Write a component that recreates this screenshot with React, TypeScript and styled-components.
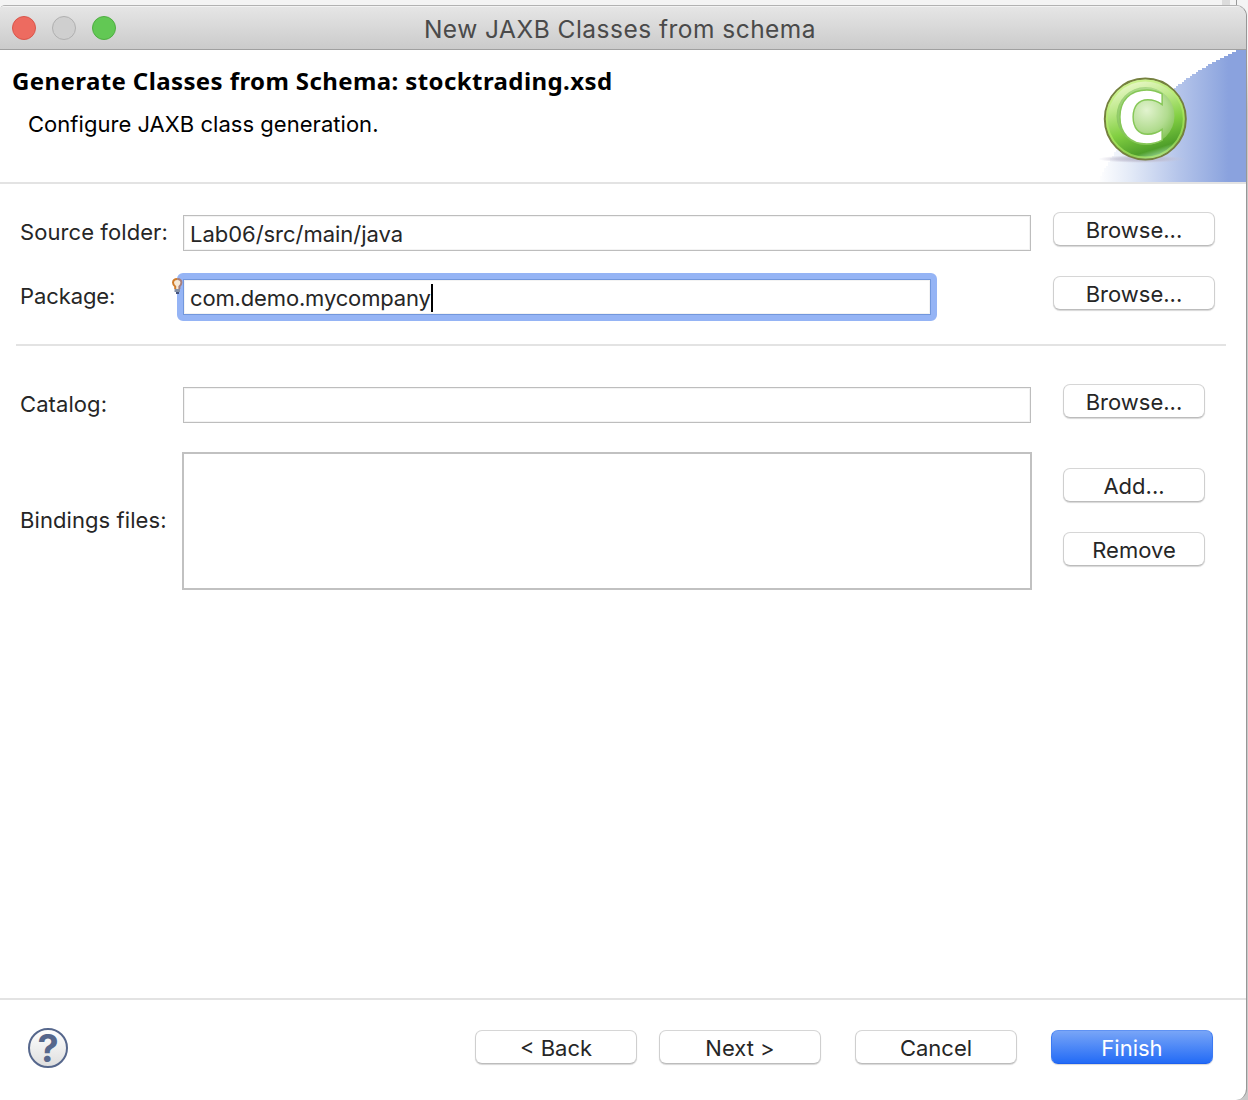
import React from "react";
import styled, { createGlobalStyle } from "styled-components";

const GlobalStyle = createGlobalStyle`
  * { box-sizing: border-box; }
  body {
    margin: 0;
    background: #f4f4f4;
    font-family: Inter, "Liberation Sans", sans-serif;
    font-size: 22px;
    color: #262626;
  }
`;

const Desktop = styled.div`
  display: flex;
  flex-direction: column;
  width: 1248px;
  height: 1100px;
  overflow: hidden;
  background: linear-gradient(#f4f4f4 0 60px, #c9c9c9 110px);
`;

const Backdrop = styled.div`
  display: flex;
  justify-content: flex-end;
  height: 5px;
  flex: none;
  background: #f4f4f4;
`;

const BackdropScroller = styled.div`
  width: 8px;
  margin-right: 6px;
  background: #dcdcdc;
`;

const BackdropEdge = styled.div`
  width: 12px;
  border-left: 1px solid #9a9a9a;
`;

const Window = styled.main`
  display: flex;
  flex-direction: column;
  width: 1247px;
  height: 1095px;
  background: #fff;
  border-top: 1px solid #b2b2b2;
  border-right: 1px solid #979797;
  border-radius: 5px 11px 11px 0;
  overflow: hidden;
`;

const TitleBar = styled.header`
  display: grid;
  grid-template-columns: 1fr auto 1fr;
  align-items: center;
  height: 44px;
  flex: none;
  padding: 0 18px 0 12px;
  background: linear-gradient(#e6e6e6, #cbcbcb);
  border-bottom: 1px solid #a0a0a0;
  box-shadow: inset 0 1px 0 #f3f3f3;
`;

const Lights = styled.div`
  display: flex;
  gap: 16px;
`;

const Light = styled.span<{ $fill: string; $edge: string }>`
  width: 24px;
  height: 24px;
  border-radius: 50%;
  background: ${(p) => p.$fill};
  border: 1px solid ${(p) => p.$edge};
`;

const WindowTitle = styled.div`
  font-size: 24.5px;
  line-height: 30px;
  letter-spacing: 0.48px;
  color: #4a4a4a;
  padding-top: 2px;
`;

const Banner = styled.section`
  display: flex;
  justify-content: space-between;
  height: 134px;
  flex: none;
  border-bottom: 2px solid #e3e3e3;
`;

const BannerText = styled.div`
  padding: 14px 0 0 12px;
  color: #000;
`;

const Heading = styled.h1`
  margin: 0;
  font: 700 24px/34px "Noto Sans", "Open Sans", sans-serif;
  letter-spacing: 0.4px;
`;

const Description = styled.p`
  margin: 11px 0 0 16px;
  line-height: 30px;
  letter-spacing: 0.03px;
`;

const Form = styled.section`
  display: flex;
  flex-direction: column;
  flex: 1;
  padding: 28px 20px 0 20px;
`;

const Row = styled.div<{ $top?: number }>`
  display: grid;
  grid-template-columns: 163px 848px 162px;
  column-gap: 0;
  justify-content: start;
  margin-top: ${(p) => p.$top ?? 0}px;
  height: 39px;
  & > :last-child { margin-left: 22px; }
`;

const Label = styled.label<{ $top?: number; $track?: number }>`
  padding-top: ${(p) => p.$top ?? 5}px;
  line-height: 30px;
  letter-spacing: ${(p) => p.$track ?? 0.08}px;
  white-space: nowrap;
`;

const Field = styled.div<{ $focused?: boolean; $width?: number; $track?: number }>`
  position: relative;
  width: ${(p) => p.$width ?? 848}px;
  height: 36px;
  margin-top: 3px;
  padding: 3px 6px 0;
  display: flex;
  line-height: 30px;
  letter-spacing: ${(p) => p.$track ?? -0.03}px;
  background: #fff;
  border: 1px solid ${(p) => (p.$focused ? "#7297dc" : "#bdbdbd")};
  box-shadow: inset 0 0 0 1px #f3f3f3;
`;

const FocusRing = styled.span`
  position: absolute;
  inset: -7px;
  border: 6px solid #95b4f5;
  border-radius: 6px;
  pointer-events: none;
`;

const Caret = styled.span`
  width: 2px;
  height: 28px;
  margin-top: 1px;
  background: #000;
`;

const Hint = styled.svg`
  position: absolute;
  left: -12px;
  top: -2px;
`;

const Button = styled.button<{ $primary?: boolean; $width?: number }>`
  width: ${(p) => p.$width ?? 162}px;
  height: 34px;
  flex: none;
  padding: 2px 0 0;
  font: inherit;
  line-height: 30px;
  letter-spacing: 0;
  color: ${(p) => (p.$primary ? "#fff" : "#262626")};
  background: ${(p) => (p.$primary ? "linear-gradient(#78a5f7, #236bf6)" : "#fff")};
  border: 1px solid;
  border-color: ${(p) => (p.$primary ? "#5f92f3 #3c7af3 #1c60ee" : "#d6d6d6 #cfcfcf #bcbcbc")};
  border-radius: 7px;
  box-shadow: 0 1px 1px rgba(0, 0, 0, 0.16);
  white-space: nowrap;
`;

const SmallButton = styled(Button)`
  width: 142px;
`;

const ButtonInset = styled.div`
  padding-left: 10px;
`;

const Divider = styled.hr`
  width: 1210px;
  height: 2px;
  margin: 29px 0 0 -4px;
  border: 0;
  flex: none;
  background: #e3e3e3;
`;

const BindingsRow = styled.div`
  display: grid;
  grid-template-columns: 162px 850px 142px;
  margin-top: 29px;
  height: 138px;
`;

const List = styled.div`
  background: #fff;
  border: 2px solid #c1c1c1;
`;

const ButtonStack = styled.div`
  display: flex;
  flex-direction: column;
  gap: 30px;
  padding: 16px 0 0 31px;
`;

const Footer = styled.footer`
  display: flex;
  height: 102px;
  flex: none;
  padding: 30px 33px 0 28px;
  border-top: 2px solid #e3e3e3;
`;

const HelpButton = styled.svg`
  margin: -2px auto 0 0;
  overflow: visible;
`;

const NavButtons = styled.div`
  display: flex;
  gap: 22px;
  margin-right: 34px;
`;

const EndButtons = styled.div`
  display: flex;
  gap: 34px;
`;

/* Stepped arc, two pixels per step, closing along the right and bottom edges. */
function steppedArc(): string {
  let d = "M150 132 L150 0";
  for (let y = 0; y < 132; y += 2) {
    const dy = 262 - (y + 1);
    const x = Math.min(150, Math.max(0, 256.6 - Math.sqrt(286 * 286 - dy * dy)));
    const snapped = Math.round(x / 2) * 2;
    d += ` L${snapped} ${y} L${snapped} ${y + 2}`;
  }
  return d + " Z";
}

function BannerArt() {
  return (
    <svg width="150" height="132" viewBox="0 0 150 132">
      <defs>
        <linearGradient id="sky" x1="0" x2="1">
          <stop offset="0" stopColor="#ffffff" />
          <stop offset="0.22" stopColor="#e3eaf7" />
          <stop offset="0.55" stopColor="#b4c4ea" />
          <stop offset="0.82" stopColor="#92a9e0" />
          <stop offset="0.88" stopColor="#8aa2de" />
          <stop offset="1" stopColor="#8aa2de" />
        </linearGradient>
        <linearGradient id="ball" x1="0.3" y1="0" x2="0.62" y2="1">
          <stop offset="0" stopColor="#effad0" />
          <stop offset="0.3" stopColor="#bfe98c" />
          <stop offset="0.6" stopColor="#82cf42" />
          <stop offset="0.88" stopColor="#4f9f2a" />
          <stop offset="1" stopColor="#a5dcae" />
        </linearGradient>
        <radialGradient id="dish" cx="0.52" cy="0.4" r="0.6">
          <stop offset="0" stopColor="#e2f3cf" />
          <stop offset="0.6" stopColor="#b2dc90" />
          <stop offset="1" stopColor="#7fc052" />
        </radialGradient>
        <radialGradient id="shade">
          <stop offset="0" stopColor="#b0acc2" stopOpacity="0.9" />
          <stop offset="0.6" stopColor="#bdbacd" stopOpacity="0.6" />
          <stop offset="1" stopColor="#c9c6d8" stopOpacity="0" />
        </radialGradient>
      </defs>
      <path d={steppedArc()} fill="url(#sky)" shapeRendering="crispEdges" />
      <ellipse cx="46" cy="109" rx="44" ry="4" fill="url(#shade)" />
      <circle cx="49.3" cy="69" r="40.5" fill="url(#ball)" stroke="#75803f" strokeWidth="2" />
      <circle cx="49.3" cy="69" r="38.5" fill="none" stroke="#b9ef6b" strokeOpacity="0.6" strokeWidth="2" />
      <circle cx="49.5" cy="66" r="29" fill="url(#dish)" />
      <text
        x="20.5"
        y="93"
        fontFamily="DejaVu Sans, sans-serif"
        fontWeight="700"
        fontSize="72"
        textLength="50"
        lengthAdjust="spacingAndGlyphs"
        fill="#fff"
        stroke="#86c757"
        strokeWidth="1.5"
      >
        C
      </text>
    </svg>
  );
}

function HelpIcon() {
  return (
    <HelpButton width="40" height="40" viewBox="0 0 40 40">
      <defs>
        <linearGradient id="help" x1="0" y1="0" x2="0" y2="1">
          <stop offset="0" stopColor="#fff" />
          <stop offset="1" stopColor="#dedede" />
        </linearGradient>
      </defs>
      <circle cx="20" cy="20" r="19" fill="url(#help)" stroke="#56678c" strokeWidth="2" />
      <text x="20.2" y="34" textAnchor="middle" fontFamily="Inter, sans-serif" fontWeight="700" fontSize="38" fill="#56678c">
        ?
      </text>
    </HelpButton>
  );
}

function Bulb() {
  return (
    <Hint width="12" height="16" viewBox="0 0 12 16">
      <path d="M3.2 11 V8.5 Q1 7 1 4.6 Q1.2 1 5.2 1 Q9.4 1 9.4 4.6 Q9.4 7 7.4 8.5 V11 Z" fill="#f6e9d6" />
      <path d="M3.2 11 V8.5 Q1 7 1 4.6 Q1.2 1 5.2 1" fill="none" stroke="#d07c2a" strokeWidth="2" />
      <path d="M5.2 1 Q9.4 1 9.4 4.6 Q9.4 7 7.4 8.5 V11" fill="none" stroke="#a87f7c" strokeWidth="2" />
      <path d="M2.5 11h5.5v3h-5.5z" fill="#8490a6" />
      <path d="M4 14h3v2h-3z" fill="#44547f" />
    </Hint>
  );
}

export default function App() {
  return (
    <>
      <GlobalStyle />
      <Desktop>
        <Backdrop>
          <BackdropScroller />
          <BackdropEdge />
        </Backdrop>
        <Window>
          <TitleBar>
            <Lights>
              <Light $fill="#ed6b60" $edge="#d9564b" />
              <Light $fill="#cfcfcf" $edge="#b0b0b0" />
              <Light $fill="#62c854" $edge="#4fae42" />
            </Lights>
            <WindowTitle>New JAXB Classes from schema</WindowTitle>
          </TitleBar>
          <Banner>
            <BannerText>
              <Heading>Generate Classes from Schema: stocktrading.xsd</Heading>
              <Description>Configure JAXB class generation.</Description>
            </BannerText>
            <BannerArt />
          </Banner>
          <Form>
            <Row>
              <Label>Source folder:</Label>
              <Field>Lab06/src/main/java</Field>
              <Button>Browse...</Button>
            </Row>
            <Row $top={25}>
              <Label $track={-0.1}>Package:</Label>
              <Field $focused $width={748} $track={-0.15}>
                <FocusRing />
                <Bulb />
                com.demo.mycompany
                <Caret />
              </Field>
              <Button>Browse...</Button>
            </Row>
            <Divider />
            <Row $top={38}>
              <Label>Catalog:</Label>
              <Field />
              <ButtonInset>
                <SmallButton>Browse...</SmallButton>
              </ButtonInset>
            </Row>
            <BindingsRow>
              <Label $top={53}>Bindings files:</Label>
              <List />
              <ButtonStack>
                <SmallButton>Add...</SmallButton>
                <SmallButton>Remove</SmallButton>
              </ButtonStack>
            </BindingsRow>
          </Form>
          <Footer>
            <HelpIcon />
            <NavButtons>
              <Button>&lt; Back</Button>
              <Button>Next &gt;</Button>
            </NavButtons>
            <EndButtons>
              <Button>Cancel</Button>
              <Button $primary>Finish</Button>
            </EndButtons>
          </Footer>
        </Window>
      </Desktop>
    </>
  );
}
